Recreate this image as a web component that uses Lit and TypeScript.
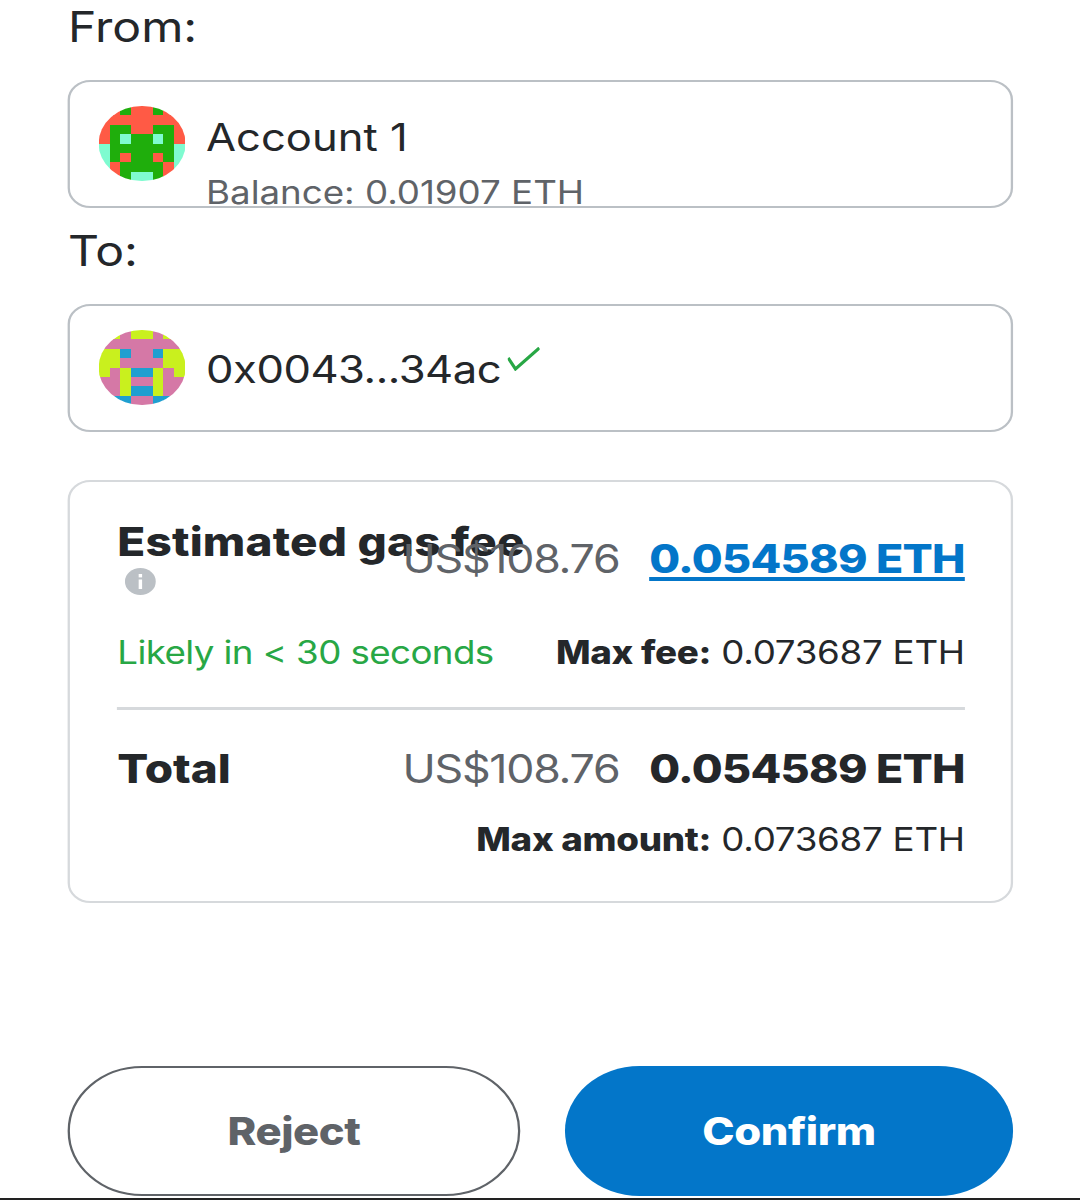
import { LitElement, html, svg, css } from "lit";
import { customElement } from "lit/decorators.js";

const A1 = ["RRGRRGRR","RRRRRRRR","RGGRRGGR","RGMGGMGR","MGGGGGGM","MGRGGRGM","MRGGGGRM","RRGMMGRR"];
const A2 = ["YYPYYPYY","PPPPPPPP","YYBPPBYY","YYPPPPYY","YPYBBYPY","PPYPPYPP","PPYBBYPP","PBBPPBBP"];
const C1: Record<string,string> = { R:"#ff5a45", G:"#1fae0c", M:"#7ffbd0" };
const C2: Record<string,string> = { P:"#d578a6", Y:"#c9f01e", B:"#1f9fd0" };

function avatar(rows: string[], colors: Record<string,string>) {
  return html`<svg class="avatar" viewBox="0 0 8 8" shape-rendering="crispEdges">
    ${rows.map((r, y) => [...r].map((c, x) => svg`<rect x=${x} y=${y} width="1.02" height="1.02" fill=${colors[c]}></rect>`))}
  </svg>`;
}

@customElement("app-root")
export class AppRoot extends LitElement {
  static styles = css`
    :host { display: block; width: 1080px; height: 1200px; overflow: hidden; background: #fff; font-family: Inter, "Open Sans", sans-serif; color: #24272a; position: relative; }
    .page { width: 942.4px; box-sizing: border-box; transform: scaleX(1.146); transform-origin: 0 0; display: flex; flex-direction: column; padding: 0 58.5px 0 59.3px; }
    .label { font-size: 42px; line-height: 50px; height: 50px; margin-top: 2px; }
    .label.to { margin-top: 18px; }
    .field { height: 128px; box-sizing: border-box; margin-top: 28px; border: 2.5px solid #bbc0c5; border-radius: 20px; display: flex; align-items: flex-start; padding: 24px 0 0 25px; gap: 18px; }
    .to-field { margin-top: 28px; }
    .avatar { width: 75.5px; height: 75px; flex: none; display: block; border-radius: 50%; }
    .name { font-size: 38px; line-height: 46px; margin-top: 8px; }
    .bal { font-size: 32px; line-height: 38px; margin-top: 14px; color: #5f6368; }
    .addr-row { display: flex; align-items: flex-start; margin-top: 16px; }
    .addr { font-size: 38px; line-height: 46px; letter-spacing: -0.4px; }
    .check { width: 28px; height: 24px; margin: 1px 0 0 6px; flex: none; }
    .card { margin-top: 48px; height: 423px; box-sizing: border-box; border: 2.5px solid #d6d9dc; border-radius: 20px; padding: 35px 40px 0 41px; display: flex; flex-direction: column; }
    .row { display: flex; justify-content: space-between; }
    .title-col { width: 244px; flex: none; }
    .title { font-size: 40px; line-height: 50px; font-weight: 800; white-space: nowrap; letter-spacing: 0.2px; }
    .info { width: 27px; height: 27px; margin: 1px 0 0 7px; display: block; }
    .fiat { font-size: 39px; line-height: 50px; color: #5f6368; letter-spacing: -1.1px; white-space: nowrap; }
    .amounts { display: flex; gap: 26px; align-items: flex-start; padding-top: 17px; }
    .link { font-size: 39px; line-height: 50px; font-weight: 800; color: #0376c9; text-decoration: underline; text-decoration-thickness: 4px; text-underline-offset: 4px; letter-spacing: -0.6px; white-space: nowrap; }
    .fee-row { margin-top: 36px; align-items: center; }
    .likely { font-size: 32px; line-height: 44px; color: #28a745; letter-spacing: -0.5px; }
    .max { font-size: 32px; line-height: 44px; color: #24272a; letter-spacing: -0.22px; white-space: nowrap; }
    .max b { font-weight: 800; }
    .rule { height: 2.5px; background: #d6d9dc; margin-top: 32px; }
    .total-row { margin-top: 34px; align-items: flex-start; }
    .total { font-size: 40px; line-height: 50px; font-weight: 800; }
    .amounts.plain { padding-top: 0; }
    .eth { font-size: 39px; line-height: 50px; font-weight: 800; letter-spacing: -0.6px; white-space: nowrap; }
    .max-row { justify-content: flex-end; margin-top: 24px; }
    .actions { display: grid; grid-template-columns: 394.4px 390.9px; gap: 39.3px; margin-top: 163px; }
    .btn { height: 130px; box-sizing: border-box; border-radius: 65px; font: 800 38px Inter, sans-serif; display: flex; align-items: center; justify-content: center; letter-spacing: -0.4px; }
    .reject { border: 2.5px solid #5f6368; color: #5f6368; background: #fff; }
    .confirm { background: #0376c9; color: #fff; }
    .bar { position: absolute; left: 0; right: 0; bottom: 0; height: 2px; background: #222; }
  `;
  render() {
    return html`<div class="page">
      <div class="label">From:</div>
      <div class="field">
        ${avatar(A1, C1)}
        <div>
          <div class="name">Account 1</div>
          <div class="bal">Balance: 0.01907 ETH</div>
        </div>
      </div>
      <div class="label to">To:</div>
      <div class="field to-field">
        ${avatar(A2, C2)}
        <div class="addr-row">
          <span class="addr">0x0043...34ac</span>
          <svg class="check" viewBox="0 0 33 24" preserveAspectRatio="none"><path d="M0.5 11 L8 22 L32.5 1" fill="none" stroke="#28a745" stroke-width="3.2"></path></svg>
        </div>
      </div>
      <div class="card">
        <div class="row">
          <div class="title-col">
            <div class="title">Estimated gas fee</div>
            <svg class="info" viewBox="0 0 27 27">
              <circle cx="13.5" cy="13.5" r="13.5" fill="#bbc0c5"></circle>
              <rect x="12" y="11.5" width="3" height="9.5" fill="#fff"></rect>
              <rect x="12" y="6" width="3" height="3.4" fill="#fff"></rect>
            </svg>
          </div>
          <div class="amounts">
            <span class="fiat">US$108.76</span>
            <span class="link">0.054589 ETH</span>
          </div>
        </div>
        <div class="row fee-row">
          <span class="likely">Likely in &lt; 30 seconds</span>
          <span class="max"><b>Max fee:</b> 0.073687 ETH</span>
        </div>
        <div class="rule"></div>
        <div class="row total-row">
          <span class="total">Total</span>
          <div class="amounts plain">
            <span class="fiat">US$108.76</span>
            <span class="eth">0.054589 ETH</span>
          </div>
        </div>
        <div class="row max-row">
          <span class="max"><b>Max amount:</b> 0.073687 ETH</span>
        </div>
      </div>
      <div class="actions">
        <div class="btn reject">Reject</div>
        <div class="btn confirm">Confirm</div>
      </div>
    </div>
    <div class="bar"></div>`;
  }
}
